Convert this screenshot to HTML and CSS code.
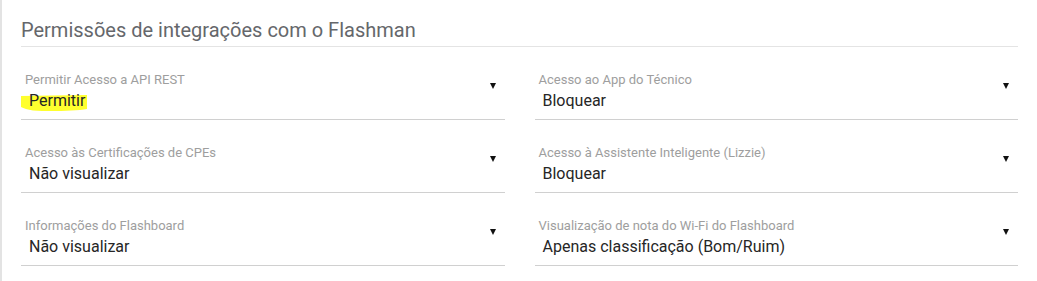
FILE: index.html
```html
<!DOCTYPE html>
<html lang="pt-BR">
<head>
<meta charset="utf-8">
<title>Permissões de integrações com o Flashman</title>
<link rel="stylesheet" href="styles.css">
</head>
<body>
<div class="panel">
  <h2 class="title">Permissões de integrações com o Flashman</h2>
  <div class="grid">
    <div class="field">
      <div class="field-text">
        <div class="label">Permitir Acesso a API REST</div>
        <div class="value highlighted">
          <svg class="marker" width="70" height="26" viewBox="0 0 70 26" aria-hidden="true">
            <path d="M0,7 L66,6 L66,20 Q60,21 50,21.5 Q30,22.5 12,21.5 Q4,20 0,18 Z" fill="#ffff2e"/>
          </svg>
          <span class="value-text">Permitir</span>
        </div>
      </div>
      <span class="arrow"></span>
    </div>
    <div class="field">
      <div class="field-text">
        <div class="label">Acesso ao App do Técnico</div>
        <div class="value">Bloquear</div>
      </div>
      <span class="arrow"></span>
    </div>
    <div class="field">
      <div class="field-text">
        <div class="label">Acesso às Certificações de CPEs</div>
        <div class="value">Não visualizar</div>
      </div>
      <span class="arrow"></span>
    </div>
    <div class="field">
      <div class="field-text">
        <div class="label">Acesso à Assistente Inteligente (Lizzie)</div>
        <div class="value">Bloquear</div>
      </div>
      <span class="arrow"></span>
    </div>
    <div class="field">
      <div class="field-text">
        <div class="label">Informações do Flashboard</div>
        <div class="value">Não visualizar</div>
      </div>
      <span class="arrow"></span>
    </div>
    <div class="field">
      <div class="field-text">
        <div class="label">Visualização de nota do Wi-Fi do Flashboard</div>
        <div class="value">Apenas classificação (Bom/Ruim)</div>
      </div>
      <span class="arrow"></span>
    </div>
  </div>
</div>
</body>
</html>
```
FILE: styles.css
```css
html, body {
  margin: 0;
  padding: 0;
  background: #ffffff;
}

body {
  font-family: Roboto, "Liberation Sans", Arial, sans-serif;
  height: 281px;
  overflow: hidden;
}

.panel {
  border-left: 2px solid #e3e3e3;
  padding: 0 19px;
  height: 281px;
  box-sizing: border-box;
}

.title {
  margin: 0;
  padding-top: 18px;
  padding-bottom: 4px;
  font-size: 20px;
  line-height: 24px;
  font-weight: 400;
  color: #65676b;
  border-bottom: 1px solid #e4e4e4;
}

.grid {
  display: grid;
  grid-template-columns: 1fr 1fr;
  column-gap: 30px;
}

.field {
  display: flex;
  align-items: flex-start;
  height: 73px;
  box-sizing: border-box;
  padding-top: 25px;
  border-bottom: 1px solid #d0d0d0;
}

.field-text {
  flex: 1;
  min-width: 0;
}

.label {
  padding-left: 4px;
  font-size: 13px;
  line-height: 16px;
  color: #9e9e9e;
}

.value {
  margin-top: 3px;
  padding-left: 8px;
  font-size: 16px;
  line-height: 20px;
  color: #262626;
}

.highlighted {
  position: relative;
}

.marker {
  position: absolute;
  left: 0;
  top: -2px;
}

.value-text {
  position: relative;
}

.arrow {
  width: 0;
  height: 0;
  margin-top: 11px;
  margin-right: 9px;
  border-left: 3.5px solid transparent;
  border-right: 3.5px solid transparent;
  border-top: 6px solid #111111;
}
```
